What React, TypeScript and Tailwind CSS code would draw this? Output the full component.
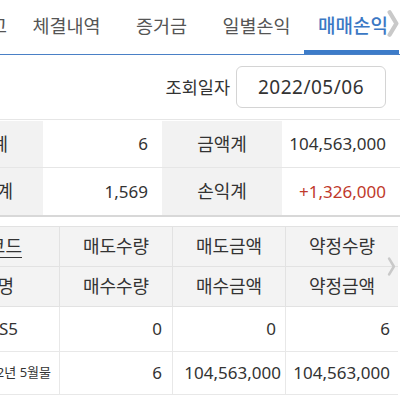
import React from "react";

const font = { fontFamily: '"Noto Sans", "Noto Sans CJK KR", sans-serif' };

function Chevron({ className, w = 3.2 }: { className: string; w?: number }) {
  return (
    <svg className={className} viewBox="0 0 10 24" fill="none">
      <path d="M2 2 L8 12 L2 22" stroke="#c9c9c9" strokeWidth={w} strokeLinecap="round" strokeLinejoin="round" />
    </svg>
  );
}

export default function App() {
  const tabs = ["체결내역", "증거금", "일별손익"];
  return (
    <div className="w-[400px] h-[400px] overflow-hidden bg-white relative text-[#333]" style={font}>
      {/* Tabs */}
      <div className="relative h-[55px] flex items-start border-b-[1.5px] border-[#4a80c6]">
        <div className="w-[19px] h-[52px] overflow-hidden flex justify-end items-center pr-[12px] shrink-0">
          <span className="whitespace-nowrap text-[18.5px] text-[#555]">잔고</span>
        </div>
        {tabs.map((t) => (
          <div key={t} className="w-[95px] h-[52px] shrink-0 flex items-center justify-center text-[18.5px] text-[#555]">
            {t}
          </div>
        ))}
        <div className="w-[95px] h-[54px] shrink-0 flex items-center justify-center text-[19px] font-medium text-[#3b78c4] border-b-[4px] border-[#3d7cc9] pt-[2px] pl-[3px]">
          매매손익
        </div>
        <Chevron className="absolute left-[387px] top-[10px] w-[12px] h-[27px]" w={3.8} />
      </div>

      {/* Date row */}
      <div className="h-[65px] flex items-center justify-end pr-[14px] gap-[6px] border-b border-[#e6e6e6]">
        <span className="text-[17.5px] text-[#333]">조회일자</span>
        <div className="w-[150px] h-[42px] border border-[#d4d4d4] rounded-[6px] flex items-center justify-center text-[19px] tracking-[0.5px] text-[#333]">
          2022/05/06
        </div>
      </div>

      {/* Summary */}
      <div className="mt-[1px] grid grid-cols-[43px_119px_120px_118px] border-b-[2px] border-[#d8d8d8] text-[17px]">
        <div className="h-[47px] bg-[#f2f2f2] flex items-center justify-end pr-[35px] overflow-hidden border-b border-[#e6e6e6]">
          <span className="whitespace-nowrap text-[18px]">수량계</span>
        </div>
        <div className="h-[47px] flex items-center justify-end pr-[14px] border-b border-[#e6e6e6]">6</div>
        <div className="h-[47px] bg-[#f2f2f2] flex items-center justify-center border-b border-[#e6e6e6] text-[18px]">금액계</div>
        <div className="h-[47px] flex items-center justify-end pr-[14px] border-b border-[#e6e6e6]">104,563,000</div>
        <div className="h-[47px] bg-[#f2f2f2] flex items-center justify-end pr-[30px] overflow-hidden">
          <span className="whitespace-nowrap text-[18px]">수수료계</span>
        </div>
        <div className="h-[47px] flex items-center justify-end pr-[14px]">1,569</div>
        <div className="h-[47px] bg-[#f2f2f2] flex items-center justify-center text-[18px]">손익계</div>
        <div className="h-[47px] flex items-center justify-end pr-[14px] text-[#c0392b]">+1,326,000</div>
      </div>

      {/* Detail table */}
      <div className="relative mt-[9px] w-[398px] border-t border-[#e2e2e2] text-[17px]">
        <div className="grid grid-cols-[60px_113px_113px_112px] bg-[#f3f3f3] text-[18px]">
          <div className="h-[40px] flex items-center justify-end pr-[37px] overflow-hidden border-r border-b border-[#e2e2e2]">
            <span className="whitespace-nowrap underline underline-offset-[4px]">종목코드</span>
          </div>
          <div className="h-[40px] flex items-center justify-center border-r border-b border-[#e2e2e2]">매도수량</div>
          <div className="h-[40px] flex items-center justify-center border-r border-b border-[#e2e2e2]">매도금액</div>
          <div className="h-[40px] flex items-center justify-center border-b border-[#e2e2e2]">약정수량</div>
          <div className="h-[40px] flex items-center justify-end pr-[45px] overflow-hidden border-r border-b border-[#e2e2e2]">
            <span className="whitespace-nowrap">종목명</span>
          </div>
          <div className="h-[40px] flex items-center justify-center border-r border-b border-[#e2e2e2]">매수수량</div>
          <div className="h-[40px] flex items-center justify-center border-r border-b border-[#e2e2e2]">매수금액</div>
          <div className="h-[40px] flex items-center justify-center border-b border-[#e2e2e2]">약정금액</div>
        </div>
        <div className="grid grid-cols-[60px_113px_113px_112px] bg-white">
          <div className="h-[45px] flex items-center justify-end pr-[41px] overflow-hidden border-r border-b border-[#e8e8e8]">
            <span className="whitespace-nowrap">101S5</span>
          </div>
          <div className="h-[45px] flex items-center justify-end pr-[10px] border-r border-b border-[#e8e8e8]">0</div>
          <div className="h-[45px] flex items-center justify-end pr-[9px] border-r border-b border-[#e8e8e8]">0</div>
          <div className="h-[45px] flex items-center justify-end pr-[8px] border-b border-[#e8e8e8]">6</div>
          <div className="h-[43px] flex items-center justify-end pr-[8px] overflow-hidden border-r border-b border-[#e8e8e8]">
            <span className="whitespace-nowrap text-[13px]">코스피200 F 2022년 5월물</span>
          </div>
          <div className="h-[43px] flex items-center justify-end pr-[10px] border-r border-b border-[#e8e8e8]">6</div>
          <div className="h-[43px] flex items-center justify-end pr-[4px] border-r border-b border-[#e8e8e8]">104,563,000</div>
          <div className="h-[43px] flex items-center justify-end pr-[8px] border-b border-[#e8e8e8]">104,563,000</div>
        </div>
        <Chevron className="absolute left-[386px] top-[30px] w-[11px] h-[19px]" />
      </div>
    </div>
  );
}
